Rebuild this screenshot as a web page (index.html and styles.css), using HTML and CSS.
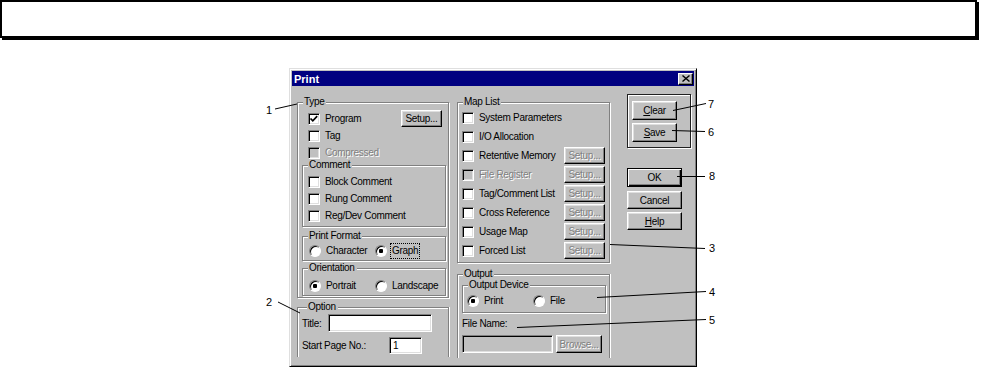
FILE: index.html
```html
<!DOCTYPE html>
<html lang="en">
<head>
  <meta charset="UTF-8">
  <meta name="viewport" content="width=device-width, initial-scale=1.0">
  <title>Print</title>
  <link rel="stylesheet" href="styles.css">
</head>
<body>
  <div class="banner"></div>

  <div class="dialog">
    <div class="titlebar">
      <span class="title">Print</span>
      <span class="close">
        <svg width="8" height="7" viewBox="0 0 8 7"><path d="M0.5 0.5 L7.5 6.5 M7.5 0.5 L0.5 6.5" stroke="#000" stroke-width="1.4"/></svg>
      </span>
    </div>

    <div class="dialog-body">
      <!-- left column -->
      <div class="col col-left">
        <div class="group type-group">
          <span class="legend">Type</span>
          <div class="row first">
            <span class="check"><svg width="10" height="10" viewBox="0 0 10 10"><path d="M1.5 4.5 L3.8 6.8 L8.2 2.2" fill="none" stroke="#000" stroke-width="1.7"/></svg></span>
            <span>Program</span>
            <span class="btn setup">Setup...</span>
          </div>
          <div class="row"><span class="check"></span><span>Tag</span></div>
          <div class="row disabled"><span class="check off"></span><span>Compressed</span></div>

          <div class="group sub comment-group">
            <span class="legend">Comment</span>
            <div class="row first"><span class="check"></span><span>Block Comment</span></div>
            <div class="row"><span class="check"></span><span>Rung Comment</span></div>
            <div class="row"><span class="check"></span><span>Reg/Dev Comment</span></div>
          </div>

          <div class="group sub format-group">
            <span class="legend">Print Format</span>
            <div class="row">
              <span class="opt"><span class="radio"></span><span>Character</span></span>
              <span class="opt"><span class="radio on"></span><span class="focus">Graph</span></span>
            </div>
          </div>

          <div class="group sub orient-group">
            <span class="legend">Orientation</span>
            <div class="row first">
              <span class="opt"><span class="radio on"></span><span>Portrait</span></span>
              <span class="opt"><span class="radio"></span><span>Landscape</span></span>
            </div>
          </div>
        </div>

        <div class="group open option-group">
          <span class="legend">Option</span>
          <div class="field title-field"><span>Title:</span><span class="input title-input"></span></div>
          <div class="field page-field"><span>Start Page No.:</span><span class="input page-input">1</span></div>
        </div>
      </div>

      <!-- middle column -->
      <div class="col col-mid">
        <div class="group map-group">
          <span class="legend">Map List</span>
          <div class="row map"><span class="check"></span><span>System Parameters</span></div>
          <div class="row map"><span class="check"></span><span>I/O Allocation</span></div>
          <div class="row map"><span class="check"></span><span>Retentive Memory</span><span class="btn setup dim">Setup...</span></div>
          <div class="row map disabled"><span class="check off"></span><span>File Register</span><span class="btn setup dim">Setup...</span></div>
          <div class="row map"><span class="check"></span><span>Tag/Comment List</span><span class="btn setup dim">Setup...</span></div>
          <div class="row map"><span class="check"></span><span>Cross Reference</span><span class="btn setup dim">Setup...</span></div>
          <div class="row map"><span class="check"></span><span>Usage Map</span><span class="btn setup dim">Setup...</span></div>
          <div class="row map"><span class="check"></span><span>Forced List</span><span class="btn setup dim">Setup...</span></div>
        </div>

        <div class="group open output-group">
          <span class="legend">Output</span>
          <div class="group sub device-group">
            <span class="legend">Output Device</span>
            <div class="row first">
              <span class="opt"><span class="radio on"></span><span>Print</span></span>
              <span class="opt"><span class="radio"></span><span>File</span></span>
            </div>
          </div>
          <div class="file-label">File Name:</div>
          <div class="file-row">
            <span class="input file-input"></span>
            <span class="btn browse dim">Browse...</span>
          </div>
        </div>
      </div>

      <!-- right column -->
      <div class="col col-right">
        <div class="frame">
          <span class="btn small"><u>C</u>lear</span>
          <span class="btn small save"><u>S</u>ave</span>
        </div>
        <span class="btn wide default">OK</span>
        <span class="btn wide cancel">Cancel</span>
        <span class="btn wide help"><u>H</u>elp</span>
      </div>
    </div>
  </div>

  <svg class="callouts" width="981" height="377" viewBox="0 0 981 377">
    <g stroke="#000" stroke-width="1" fill="none">
      <path d="M275 109 L297 104"/>
      <path d="M278 302 L300 313"/>
      <path d="M673 110.5 L706 103.5"/>
      <path d="M672 130.5 L705 131.5"/>
      <path d="M677 176.5 L705 176.5"/>
      <path d="M610 244.5 L705 248.5"/>
      <path d="M597 297.5 L706 291.5"/>
      <path d="M517 327.5 L706 319.5"/>
    </g>
    <g class="num">
      <text x="266" y="114">1</text>
      <text x="266" y="306">2</text>
      <text x="708" y="108">7</text>
      <text x="708" y="136">6</text>
      <text x="709" y="180">8</text>
      <text x="709" y="252">3</text>
      <text x="709" y="296">4</text>
      <text x="709" y="324">5</text>
    </g>
  </svg>
</body>
</html>
```

FILE: styles.css
```css
body {
  margin: 0;
  background: #fff;
  font-family: "Liberation Sans", Arial, sans-serif;
  position: relative;
  width: 981px;
  height: 377px;
  overflow: hidden;
}

.banner {
  width: 977px;
  height: 38px;
  box-sizing: border-box;
  border: 2px solid #000;
  box-shadow: 2px 2px 0 #000;
}

/* window */
.dialog {
  margin: 30px 0 0 289px;
  width: 408px;
  height: 299px;
  box-sizing: border-box;
  background: #c0c0c0;
  border: 1px solid;
  border-color: #dfdfdf #000 #000 #dfdfdf;
  box-shadow: inset 1px 1px #fff, inset -1px -1px #808080;
  padding: 2px;
  font-size: 10px;
  letter-spacing: -0.3px;
  color: #000;
}
.titlebar {
  height: 15px;
  background: #000080;
  display: flex;
  align-items: center;
  padding-left: 2px;
}
.title {
  color: #fff;
  font-weight: bold;
  font-size: 11px;
  letter-spacing: 0;
}
.close {
  margin-left: auto;
  margin-right: 1px;
  width: 15px;
  height: 12px;
  box-sizing: border-box;
  background: #c0c0c0;
  border: 1px solid;
  border-color: #fff #000 #000 #fff;
  box-shadow: inset -1px -1px #808080;
  display: flex;
  align-items: center;
  justify-content: center;
}

.dialog-body {
  display: flex;
  padding: 8px 0 0 5px;
}
.col-left, .col-mid {
  padding-top: 8px;
}
.col-left { width: 152px; }
.col-mid { width: 153px; margin-left: 8px; }
.col-right {
  width: 64px;
  margin-left: 17px;
  display: flex;
  flex-direction: column;
}

/* group boxes */
.group {
  box-sizing: border-box;
  border: 1px solid #808080;
  box-shadow: inset 1px 1px #fff, 1px 1px #fff;
}
.group.open {
  border-bottom: none;
  box-shadow: inset 1px 1px #fff, 1px 0 #fff;
}
.legend {
  display: block;
  width: max-content;
  height: 12px;
  line-height: 12px;
  margin: -7px 0 0 5px;
  padding: 0 2px 0 1px;
  background: #c0c0c0;
}
.group.sub {
  width: 144px;
  margin-left: 4px;
}

.type-group { height: 196px; }
.comment-group { height: 62px; margin-top: 4px; }
.comment-group .row { padding-left: 5px; }
.format-group { height: 25px; margin-top: 9px; }
.orient-group { height: 28px; margin-top: 7px; }
.orient-group .row.first { margin-top: 3px; }
.option-group { height: 50px; margin-top: 9px; padding-left: 4px; }

.map-group { height: 161px; }
.output-group { height: 84px; margin-top: 11px; }
.device-group { width: 135px; height: 28px; margin-top: 5px; }
.device-group .row.first { margin-top: 1px; }

/* rows and controls */
.row {
  display: flex;
  align-items: center;
  height: 17px;
  padding-left: 10px;
}
.row.first { margin-top: 2px; }
.row.map {
  height: 19px;
  padding-left: 4px;
}
.format-group .row,
.orient-group .row {
  padding-left: 6px;
}
.device-group .row { padding-left: 4px; }

.check {
  width: 12px;
  height: 12px;
  box-sizing: border-box;
  flex: none;
  background: #fff;
  border: 1px solid;
  border-color: #808080 #fff #fff #808080;
  box-shadow: inset 1px 1px #000, inset -1px -1px #dfdfdf;
  margin-right: 5px;
}
.check svg { display: block; }
.check.off { background: #c0c0c0; }

.disabled > span:nth-child(2) {
  color: #808080;
  text-shadow: 1px 1px 0 #fff;
}

.opt {
  display: flex;
  align-items: center;
}
.opt:first-child { width: 66px; }
.radio {
  width: 12px;
  height: 12px;
  box-sizing: border-box;
  flex: none;
  border-radius: 50%;
  background: #fff;
  border: 1px solid;
  border-color: #808080 #fff #fff #808080;
  box-shadow: inset 1px 1px #000;
  margin-right: 5px;
}
.radio.on {
  background: radial-gradient(circle, #000 0 2px, #fff 2.5px);
}
.focus {
  border: 1px dotted #000;
  padding: 1px 1px;
  line-height: 12px;
  margin-left: -2px;
}

.btn {
  box-sizing: border-box;
  display: flex;
  align-items: center;
  justify-content: center;
  flex: none;
  background: #c0c0c0;
  border: 1px solid;
  border-color: #fff #000 #000 #fff;
  box-shadow: inset -1px -1px #808080, inset 1px 1px #dfdfdf;
}
.btn.dim {
  color: #808080;
  text-shadow: 1px 1px 0 #fff;
}
.btn.setup {
  width: 41px;
  height: 17px;
  margin-left: auto;
  margin-right: 6px;
}
.row.map .btn.setup { margin-right: 4px; }
.btn u { text-decoration: underline; }

.field {
  display: flex;
  align-items: center;
}
.title-field { height: 18px; margin-top: 1px; }
.page-field { height: 17px; margin-top: 5px; }
.input {
  box-sizing: border-box;
  display: flex;
  align-items: center;
  background: #fff;
  border: 1px solid;
  border-color: #808080 #fff #fff #808080;
  box-shadow: inset 1px 1px #000, inset -1px -1px #dfdfdf;
  padding-left: 3px;
}
.title-input {
  width: 104px;
  height: 18px;
  margin-left: 6px;
}
.page-input {
  width: 33px;
  height: 17px;
  margin-left: 23px;
}

.file-label {
  height: 12px;
  line-height: 12px;
  margin: 5px 0 0 4px;
}
.file-row {
  display: flex;
  margin: 5px 0 0 4px;
}
.file-input {
  width: 91px;
  height: 18px;
  background: #c0c0c0;
}
.btn.browse {
  width: 46px;
  height: 18px;
  margin-left: 3px;
}

/* right buttons */
.frame {
  width: 64px;
  height: 54px;
  box-sizing: border-box;
  border: 1px solid #202020;
  box-shadow: 1px 1px #fff, inset 1px 1px #fff;
  padding: 6px 0 0 4px;
}
.btn.small {
  width: 45px;
  height: 19px;
}
.btn.small.save { margin-top: 3px; }
.btn.wide {
  width: 55px;
  height: 18px;
}
.btn.default {
  height: 19px;
  margin-top: 20px;
  border-color: #000;
  box-shadow: inset 1px 1px #fff, inset -1px -1px #000, inset -2px -2px #808080;
}
.btn.cancel { margin-top: 4px; }
.btn.help { margin-top: 3px; }

/* annotation overlay */
.callouts {
  position: absolute;
  top: 0;
  left: 0;
  pointer-events: none;
}
.num text {
  font-family: "Liberation Sans", Arial, sans-serif;
  font-size: 11px;
  fill: #000;
}
```
